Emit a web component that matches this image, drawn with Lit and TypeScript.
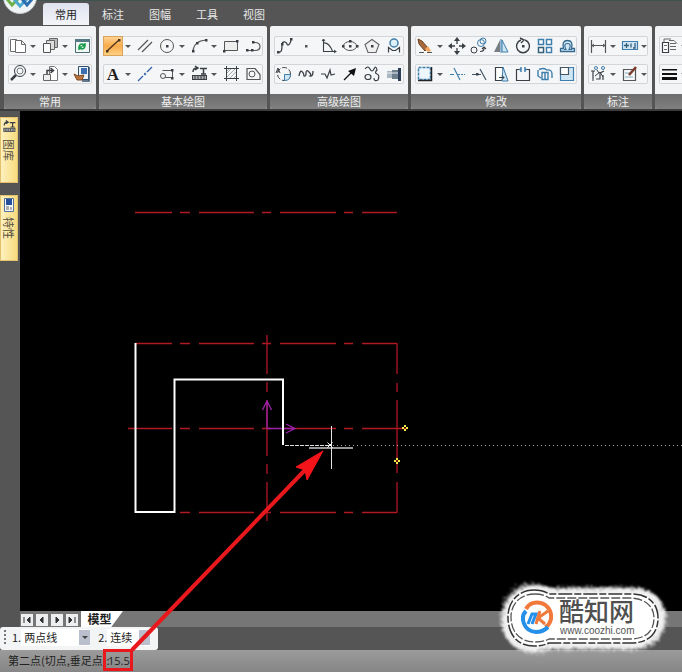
import { LitElement, html, svg, css, SVGTemplateResult } from "lit";
import { customElement, property } from "lit/decorators.js";

const K = "#3a3f46";
const B = "#3f7fae";
const L = "#cfe6f5";

const line = (d: string, c = K, w = 1, f = "none") =>
  svg`<path d=${d} stroke=${c} stroke-width=${w} fill=${f}></path>`;
const dots = (pts: number[][], c = K) =>
  pts.map(([x, y]) => svg`<rect x=${x - 1} y=${y - 1} width="2.5" height="2.5" fill=${c}></rect>`);

const icons: Record<string, SVGTemplateResult> = {
  copy: svg`${line("M3.5 3.5h5v12h-6v-12z", "#6b6b6b", 1, "#fff")}${line("M7.5 4.5h6l4 4v8h-10zM13.5 4.5v4h4", "#6b6b6b", 1, "#fff")}`,
  paste: svg`${line("M9.5 2.5h8v9h-8z", "#666", 1, "#bbb")}${line("M6.5 4.5h8v9h-8z", "#666", 1, "#ddd")}${line("M3.5 7.5h7v9h-7z", "#555", 1, "#fafafa")}`,
  refresh: svg`${line("M3.5 3.5h14v13h-14z", "#4c6b74", 1, "#eff8f3")}${line("M3 4.5h15", "#557a86", 3)}${line("M7 10q3-4 6 0M13 7v3h-3M13 11q-3 4-6 0M7 14v-3h3", "#159a4a", 1.5)}`,
  zoom: svg`<circle cx="12" cy="7" r="5.5" fill="#f4f8fb" stroke=${K}></circle><circle cx="12" cy="7" r="3" fill="none" stroke="#777"></circle>${line("M8 11l-5 5", K, 2.5)}`,
  block: svg`${line("M9.5 2.5h5l3 3v11h-8z", "#777", 1, "#fff")}${line("M3.5 10.5h7v6h-7z", "#666", 1, "#eee")}${line("M7 10V6.5h6M10.500 4l3 2.5-3 2.5", K, 1.5)}`,
  props: svg`${line("M6.5 2.5h10v13h-10z", "#35506e", 1, "#eaf2fb")}<rect x="9" y="4" width="6" height="6" fill="#3b6fb0"></rect><path d="M2 10l4 2 6-1-2 5H5z" fill="#bd7541" stroke="#7c4a24"></path>${line("M17 3v14h-7", "#35506e", 1.5)}`,
  line: svg`${line("M4 15L16 4", "#4b341d", 1.3)}${dots([[4, 15], [16, 4]], "#4b341d")}`,
  parallel: svg`${line("M3 14L13 4M7 16L17 6", "#555", 1.2)}`,
  circle: svg`<circle cx="10" cy="10" r="6.5" fill="none" stroke="#555"></circle>${dots([[10, 10]])}`,
  arc: svg`${line("M4 15Q5 5 17 4", "#555", 1.2)}${dots([[4, 15], [17, 4], [8, 7]])}`,
  rect: svg`${line("M3.5 5.5h13v9h-13z", "#555", 1, "#eee")}${dots([[16, 5], [3, 15]])}`,
  pline: svg`${line("M4 14.5h8q5 0 5-4t-5-4h-2M4 14.5h5", "#555", 1.2)}${dots([[4, 14], [9, 14], [10, 6]])}`,
  text: svg`<text x="10" y="16" text-anchor="middle" font-family="Liberation Serif, serif" font-weight="bold" font-size="17" fill="#222">A</text>`,
  axis: svg`${line("M3 17L8 12M12 8l5-5", "#2f62a8", 1.3)}${line("M9.3 10.7l1.4-1.400", "#2f62a8", 2)}`,
  callout: svg`${line("M5.5 6.5h10v7h-8", "#555", 1)}<circle cx="6" cy="12" r="2.5" fill="#f4f5f7" stroke="#555"></circle>${dots([[15, 14], [15, 6]])}`,
  library: svg`${line("M4 8q0-4 4-4M6 2l3 2-3 2M11 4.5h7M14.5 4v6M12 10h5", K, 1.5)}<rect x="3.5" y="11.5" width="14" height="4" fill="#aaa" stroke=${K}></rect>${line("M6 12v3M9 12v3M12 12v3M15 12v3", K)}`,
  hatch: svg`${line("M5.5 2v15M15.5 2v15M3 4.5h15M3 14.5h15", K, 1)}${line("M6 9l4-4M6 13l8-8M9 14l6-6M13 14l2-2M6 7l2-2", "#999", .8)}`,
  region: svg`${line("M4 4.5h8l5 6v5H4z", "#555", 1.2)}<circle cx="9" cy="10" r="3" fill="none" stroke="#555"></circle>`,
  spline: svg`${line("M4 16c4 1 4-3 4-7s4-4 5-1 4-1 4-5", K, 1.3)}${dots([[4, 16], [8, 8], [17, 3]])}`,
  point: svg`<rect x="9" y="9" width="2.5" height="2.5" fill="#555"></rect>`,
  formula: svg`${line("M5.5 3v12.5h13M5.5 7q5-1 9 8", K, 1.1)}${line("M4 5l1.5-2L7 5M16 14l2 1.5-2 1.5", K)}`,
  ellipse: svg`<ellipse cx="10" cy="10" rx="6.5" ry="4.5" fill="none" stroke="#555"></ellipse>${dots([[10, 5], [3, 10], [17, 10], [10, 10]])}`,
  polygon: svg`${line("M10 3.5l7 5-3 8H6L3 8.5z", "#666", 1.1, "#f0f0f0")}${dots([[10, 10]])}`,
  stamp: svg`<circle cx="10" cy="7" r="4" fill="#dff0fa" stroke=${B} stroke-width="1.5"></circle>${line("M4.5 16.5v-5l4 3h3l4-3v5", K, 1.2)}`,
  detail: svg`<circle cx="10" cy="10" r="6.5" fill="none" stroke="#444" stroke-dasharray="5 2"></circle>${line("M2 9l2-5 2 5M3 7h2", K)}<path d="M10.5 10.5h6q0 6-6 6z" fill=${L} stroke=${B}></path>`,
  wave: svg`${line("M3 12q1-6 3-4.5T8 12q2 1 2-3t3-1 1 4q3 1 3-5", K, 1.3)}`,
  breakline: svg`${line("M3 10h4l2 4 3-8 1 5 4-1", K, 1.2)}`,
  arrow: svg`${line("M4 16l8-8", "#111", 1.2)}<path d="M16 4l-2 8-6-5z" fill="#111"></path>`,
  contour: svg`${line("M3 5q3-4 5 0t4 0 3 1q-3 3 0 4t1 6q-4 2-4-2", K, 1.2)}<ellipse cx="6" cy="13" rx="3" ry="2.5" fill="none" stroke=${K} stroke-width="1.2"></ellipse>`,
  shaft: svg`<rect x="3" y="7" width="5" height="7" fill="#aab6bf"></rect><path d="M8 6h6v9H8z" fill="#6e7f8d"></path><path d="M14 4h3v13h-3z" fill="#2d3d57"></path>${line("M3 9h11", "#e8eef3")}`,
  erase: svg`${line("M3 3l4 2 6 7-3 3-6-7z", "#6b4524", 1, "#a9683a")}<path d="M10 13l3-3 3 5-3 1z" fill="#f0a45c"></path>${line("M4 16.500h5M12 16.500h5", "#555")}`,
  move: svg`${line("M10 3v14M3 10h14", K, 1.3)}<path d="M10 1l3 4H7zM10 19l3-4H7zM1 10l4-3v6zM19 10l-4-3v6z" fill=${K}></path><rect x="8" y="8" width="4" height="4" fill="#f4f5f7"></rect>`,
  duplicate: svg`<circle cx="12" cy="7" r="3.5" fill="none" stroke=${B}></circle><circle cx="14" cy="5" r="3" fill="none" stroke=${B}></circle><circle cx="5" cy="14" r="3" fill="none" stroke=${K}></circle>${line("M11 15.5q4 0 4-3M13 13l2-2 2 2", K, 1.2)}`,
  mirror: svg`<path d="M9 4v12H3z" fill="#777d84"></path><path d="M11 4v12h6z" fill=${L} stroke=${B}></path>${line("M10 3v14", B)}`,
  rotate: svg`${line("M12 4a6.5 6.5 0 1 1-4 0M7 2l4 2-3 3", K, 1.4)}${dots([[10, 10]])}`,
  array: svg`${line("M3.5 3.5h5v5h-5zM11.500 3.5h5v5h-5zM11.500 11.500h5v5h-5z", B, 1.5, "#fff")}${line("M3.5 11.500h5v5h-5z", "#356078", 1.5, "#fff")}`,
  offset: svg`${line("M3.5 15.5v-3h3q-2-8 4-8t4 8h3v3z", "#356a90", 1.3, L)}${line("M7 13.5h2q-3-6 1.5-6t1.5 6h3", "#356a90", 1.1)}`,
  crop: svg`<path d="M3.5 3.5h12v12h-12z" fill="#edf6fc" stroke=${B} stroke-width="1.5" stroke-dasharray="3 1"></path>${line("M16.500 3v13.5H3", "#222", 1.5)}`,
  trim: svg`${line("M3 10.5h4M7 4l6 12", B, 1.2)}<path d="M11 10.5h7" stroke=${B} stroke-dasharray="2 1"></path>`,
  extend: svg`${line("M3 10.5h9M11 5l6 11", "#456", 1.2)}${dots([[8, 10]])}`,
  stretch: svg`${line("M4.5 3.5h7l5 13h-12z", K, 1.2, "#fff")}<path d="M12 3l5 14h-6z" fill=${L} stroke=${B}></path>${line("M8 13.5h5M11 11.500l2 2-2 2", K)}`,
  breakat: svg`${line("M6 5.5H3.5v11h13v-11H14", K, 1.2)}${line("M8 3v5M12 3v5M6 5.5h2M12 5.5h2", B, 1.5)}`,
  scale: svg`${line("M3 6v6l3 2M4 5.5q5-2 7 0M7 8.5h6v7H7zM11 6q6-1 6 4v4M10 9v6", B, 1.4, "none")}`,
  corner: svg`${line("M3.5 3.5h13v13h-13z", B, 1.2, L)}${line("M3.5 3.5h8v7h-8z", "#456", 1.2, "#fff")}`,
  dimension: svg`${line("M3.5 4v13M17.500 4v13M4 9.5h13", "#555", 1.2)}${line("M6 8L4 9.5 6 11M15 8l2 1.5-2 1.5", "#555")}`,
  tolerance: svg`${line("M2.5 5.5h15v8h-15z", B, 1.2, L)}${line("M4 9.5h5M6.500 7v5M11 7.5v4M15 7v5h-2", "#356078", 1.3)}`,
  coord: svg`${line("M3 7h4M5 7v8M8 15h4V9M12 9l4-2M15 11v5M4 16h2", K, 1.2)}<circle cx="8" cy="4" r="1.5" fill="none" stroke=${B}></circle><circle cx="15" cy="4" r="1.5" fill="none" stroke=${B}></circle>${line("M9 6l2 3M7 12l5-4 3 5", K)}`,
  editdim: svg`${line("M3.5 5.5h12v11h-12z", "#555", 1.2, "#f4f8fb")}${line("M5 9h5M5 13h8", "#8ab")}${line("M9 11l7-8", "#7b3c2c", 2.5)}`,
  layers: svg`${line("M3.5 6.5h6v10h-6z", K, 1.2, "#fff")}${line("M5 9.5h3M5 13.5h3M10 4.5h5l3 3M11 7.5h6M11 10.5h6M11 13.5h6", "#666")}${line("M5 6V3h7", "#666")}`,
  weight: svg`<path d="M3 5h15v1.5H3zM3 9h15v2H3zM3 13h15v3H3z" fill="#111"></path>`,
};

interface Panel {
  title: string;
  rows: string[][];
}

// A trailing "+" marks a tool that opens a drop-down list of variants.
const panels: Panel[] = [
  { title: "常用", rows: [["copy+", "paste+", "refresh"], ["zoom+", "block+", "props"]] },
  { title: "基本绘图", rows: [["line+", "parallel", "circle+", "arc+", "rect", "pline"], ["text+", "axis", "callout+", "library+", "hatch", "region"]] },
  { title: "高级绘图", rows: [["spline", "point", "formula", "ellipse", "polygon", "stamp"], ["detail", "wave", "breakline", "arrow", "contour", "shaft"]] },
  { title: "修改", rows: [["erase+", "move", "duplicate", "mirror", "rotate", "array", "offset"], ["crop+", "trim", "extend", "stretch", "breakat", "scale", "corner"]] },
  { title: "标注", rows: [["dimension+", "tolerance+"], ["coord+", "editdim+"]] },
  { title: "", rows: [["layers+", "layers"], ["weight+", "weight"]] },
];

@customElement("cad-panel")
class CadPanel extends LitElement {
  @property({ attribute: false }) panel!: Panel;

  static styles = css`
    :host { display: flex; flex-direction: column; flex: none; border-radius: 2px; overflow: hidden; background: #f2f3f4; }
    .rows { display: grid; align-content: start; gap: 8px; padding: 10px 4px; flex: 1; box-sizing: border-box; }
    .row { display: flex; gap: 2px; height: 20px; border-radius: 2px; box-shadow: inset 0 0 0 1px #d3d5d8; background: #f5f6f7; }
    .tool { display: flex; flex: none; }
    button { border: 0; padding: 0; margin: 0; background: none; display: grid; place-items: center; }
    .icon { width: 20px; height: 20px; }
    .active { background: linear-gradient(#ffd79a, #f9ab4b 50%, #ffd58a); box-shadow: inset 0 0 0 1px #d9a45e; }
    .drop { width: 10px; }
    .tool:last-child .drop { width: 8px; }
    .caret { border: 3px solid transparent; border-top-color: #555; border-bottom: 0; }
    .title { height: 16px; line-height: 14px; text-align: center; color: #f0f0f0; font-size: 11px; background: linear-gradient(#6c6c6c, #808080); }
    svg { display: block; }
  `;

  render() {
    return html`
      <div class="rows">
        ${this.panel.rows.map((row) => html`<div class="row">
          ${row.map((entry) => {
            const name = entry.replace("+", "");
            return html`<span class="tool">
              <button class="icon ${name === "line" ? "active" : ""}" aria-label=${name}>
                <svg width="20" height="20" viewBox="0 0 20 20">${icons[name]}</svg>
              </button>
              ${entry.endsWith("+") ? html`<button class="drop" aria-label="${name} ▾"><span class="caret"></span></button>` : ""}
            </span>`;
          })}
        </div>`)}
      </div>
      <div class="title">${this.panel.title}</div>`;
  }
}

const centreDashX = "M180 0h10M199 0h55M262 0h9M280 0h56M344 0h9M362 0h35";

@customElement("cad-drawing")
class CadDrawing extends LitElement {
  static styles = css`
    :host { display: block; background: #000; overflow: hidden; }
    svg { display: block; width: 100%; height: 100%; }
  `;

  render() {
    return html`<svg>
      <g transform="translate(-20 -111)" fill="none">
        <g stroke="#b01822" stroke-width="1.3">
          <path transform="translate(0 212.5)" d="M135 0h37${centreDashX}"></path>
          <path transform="translate(0 343.5)" d="M135 0h37${centreDashX}"></path>
          <path transform="translate(0 428.5)" d="M128 0h44M180 0h10M199 0h55M262 0h9M283 0h53M344 0h9M362 0h46"></path>
          <path transform="translate(0 512.5)" d=${centreDashX}></path>
          <path d="M267 335v39M267 382v10M267 400v56M267 464v10M267 482v39M397 343v31M397 383v9M397 400v73M397 482v31"></path>
        </g>
        <path d="M267 428.5V402M262.500 410l4.5-9 4.5 9M267 428.5h27M286 424l9 4.5-9 4.5" stroke="#9a22aa" stroke-width="1.3"></path>
        <path d="M135.500 343v169h39V379.500H283V445" stroke="#fff" stroke-width="2"></path>
        <path d="M285 445.500h45" stroke="#ddd" stroke-dasharray="4 1"></path>
        <path d="M333 445.500h2000" stroke="#aaa" stroke-dasharray="1 3"></path>
        <path d="M309 448h44" stroke="#989898" stroke-width="2"></path>
        <path d="M331.500 426v43" stroke="#e4e4e4"></path>
        <path d="M327.500 442.500l5 5M332.500 442.500l-5 5" stroke="#fff"></path>
        <path d="M405 425v2M405 429v2M402 428h2M406 428h2M397 458v2M397 462v2M394 461h2M398 461h2" stroke="#f0ec4a" stroke-width="2"></path>
      </g>
    </svg>`;
  }
}

@customElement("app-root")
class AppRoot extends LitElement {
  static styles = css`
    :host { display: flex; flex-direction: column; position: relative; min-height: 100vh; overflow: hidden; box-sizing: border-box; background: #555; font: 12px "Noto Sans CJK SC", sans-serif; color: #222; }
    button, select, input { font: inherit; color: inherit; }
    button { border: 0; padding: 0; margin: 0; }
    .tabs { display: flex; align-items: stretch; height: 26px; box-sizing: border-box; padding: 2px 0 1px 43px; gap: 1px; border-top: 1px solid #3e5250; }
    .tab { width: 46px; color: #e8e8e8; background: none; line-height: 20px; font-size: 11px; }
    .tab.on { color: #222; background: linear-gradient(#dfe2ef, #f4f5f9); border-radius: 3px 3px 0 0; }
    .logo { position: absolute; left: 2px; top: -21px; }
    .ribbon { display: flex; gap: 3px; height: 85px; padding: 0 0 0 4px; box-sizing: border-box; overflow: hidden; border-bottom: 2px solid #3c3c3c; }
    .work { display: flex; flex: 1; }
    .side { width: 20px; flex: none; padding-top: 6px; box-sizing: border-box; display: flex; flex-direction: column; gap: 12px; }
    .dock { width: 18px; height: 66px; padding: 2px 0 0; display: flex; flex-direction: column; align-items: center; gap: 4px; background: linear-gradient(90deg, #fff3c4, #f8d979); box-shadow: inset 0 0 0 1px #e4c26c; }
    .vert { writing-mode: vertical-rl; text-orientation: sideways; line-height: 16px; font-size: 11px; color: #55503f; }
    cad-drawing { flex: 1; }
    .sheets { display: flex; height: 16px; margin-left: 20px; padding-left: 1px; background: #767676; }
    .nav { width: 12px; height: 12px; margin: 3px 3px 0 0; background: #eceef0; display: grid; place-items: center; }
    .sheet { width: 42px; padding-right: 5px; background: #fff; clip-path: polygon(0 0, 100% 0, 72% 100%, 0 100%); font-size: 12px; font-weight: bold; line-height: 16px; }
    .options { display: flex; align-self: flex-start; align-items: center; height: 23px; width: 158px; box-sizing: border-box; padding: 0 0 3px 4px; background: #f3f4f5; border-radius: 3px; font-size: 11px; }
    .grip { width: 2px; height: 14px; border-left: 2px dotted #777; box-sizing: border-box; margin-right: 6px; }
    .pick { display: flex; align-items: center; }
    .pick + .pick { margin-left: 8px; }
    .field { position: relative; display: flex; }
    select { appearance: none; border: 0; height: 17px; padding: 0 0 0 3px; margin: 0; border-radius: 0; background: #fff; }
    .wide { width: 69px; }
    .narrow { width: 43px; }
    .caret { position: absolute; right: 0; top: 1px; bottom: 1px; width: 11px; display: grid; place-items: center; background: #b9bfcc; pointer-events: none; }
    .caret::after { content: ""; border: 3px solid transparent; border-top-color: #444; border-bottom: 0; }
    .status { display: flex; align-items: center; height: 22px; box-sizing: border-box; padding: 0 0 2px 8px; background: linear-gradient(#9b9b9b, #868686); font-size: 11px; }
    .status label { width: 100px; white-space: nowrap; }
    .status input { width: 24px; border: 0; padding: 0; background: none; font-family: "Open Sans", sans-serif; font-size: 11px; outline: 0; }
    .pointer { position: absolute; left: 0; bottom: 0; pointer-events: none; }
    .brand { position: absolute; right: 12px; bottom: 14px; pointer-events: none; }
  `;

  render() {
    return html`
      <nav class="tabs">
        ${["常用", "标注", "图幅", "工具", "视图"].map((t, i) => html`<button class="tab ${i === 0 ? "on" : ""}">${t}</button>`)}
      </nav>
      <svg class="logo" width="36" height="36" viewBox="0 0 36 36">
        <circle cx="18" cy="18" r="16.5" fill="#f1f4f5" stroke="#c4c9cc"></circle>
        <path d="M5 20l5 6 6-6" fill="none" stroke="#6fb04a" stroke-width="3"></path>
        <path d="M11 19l7 8 7-7" fill="none" stroke="#4aa9cc" stroke-width="3"></path>
        <path d="M20 20l5 6 6-7" fill="none" stroke="#2c6eb0" stroke-width="3"></path>
      </svg>
      <div class="ribbon">${panels.map((p) => html`<cad-panel .panel=${p}></cad-panel>`)}</div>
      <main class="work">
        <aside class="side">
          <button class="dock"><svg width="16" height="16" viewBox="0 0 20 20">${icons.library}</svg><span class="vert">图库</span></button>
          <button class="dock"><svg width="14" height="16" viewBox="0 0 14 16"><path d="M2.5 1.5h9v13h-9z" fill="#f4f7fc" stroke="#53709a"></path><path d="M4 2h6v6H4z" fill="#264f9a"></path><path d="M4 10h3M4 12h3M9 10v3" stroke="#666"></path></svg><span class="vert">特性</span></button>
        </aside>
        <cad-drawing></cad-drawing>
      </main>
      <div class="sheets">
        ${["M4 4v6M10 4L7 7l3 3z", "M8 4L5 7l3 3z", "M6 4l3 3-3 3z", "M10 4v6M4 4l3 3-3 3z"].map((d, i) => html`
          <button class="nav" aria-label="sheet ${i + 1}"><svg width="12" height="12" viewBox="1 1 12 12"><path d=${d} fill="#333" stroke="#333"></path></svg></button>`)}
        <button class="sheet">模型</button>
      </div>
      <div class="options">
        <span class="grip"></span>
        <label class="pick">1.<span class="field"><select class="wide"><option>两点线</option></select><span class="caret"></span></span></label>
        <label class="pick">2.<span class="field"><select class="narrow"><option>连续</option></select><span class="caret"></span></span></label>
      </div>
      <footer class="status">
        <label for="cmd">第二点(切点,垂足点):</label><input id="cmd" value="15.5">
      </footer>
      <svg class="pointer" width="340" height="230" viewBox="0 442 340 230">
        <rect x="104.5" y="650.5" width="27" height="19" fill="none" stroke="#e8181c" stroke-width="3"></rect>
        <path d="M132 650L306 469" stroke="#e8181c" stroke-width="4"></path>
        <path d="M323 451L296 467l9 3 2 10z" fill="#f5141a" stroke="#f5141a"></path>
      </svg>
      <svg class="brand" width="174" height="80" viewBox="496 578 174 80">
        <defs>
          <filter id="fuzz" x="-10%" y="-20%" width="120%" height="140%">
            <feTurbulence type="fractalNoise" baseFrequency=".7" numOctaves="2" result="n"></feTurbulence>
            <feDisplacementMap in="SourceGraphic" in2="n" scale="12" result="d"></feDisplacementMap>
            <feGaussianBlur in="d" stdDeviation="1"></feGaussianBlur>
          </filter>
        </defs>
        <path d="M534 588q8 0 15 3h83c20 0 30 12 30 26 0 17-11 29-30 29h-83c-6 3-10 3-16 3-18 0-28-13-28-31 0-17 12-30 29-30z" fill="#f8f8f8" stroke="#f0f0f0" stroke-width="7" filter="url(#fuzz)"></path>
        <path d="M534 590q9 0 15 4h82c18 0 27 10 27 24 0 15-9 25-27 25h-82c-7 3-10 3-15 3-17 0-26-12-26-29 0-15 10-27 26-27z" fill="#fff" stroke="#333" stroke-width="1.5" stroke-dasharray="14 2 7 2"></path>
        <path d="M535 594q8 0 14 4h80c16 0 25 8 25 20 0 13-8 21-24 21h-81c-6 3-10 3-14 3-16 0-24-11-24-25 0-13 9-23 24-23z" fill="#fff" stroke="#555" stroke-width="1.3" stroke-dasharray="9 2"></path>
        <g fill="none" stroke-width="4">
          <path d="M526 609c6-12 27-7 25 10-1 4-3 7-6 8" stroke="#f0793b"></path>
          <path d="M526 611c-6 6-3 20 10 21 5 0 9-2 12-5" stroke="#2490ea"></path>
          <path d="M528 624l4-10h4l-4 10" stroke="#2490ea" stroke-width="3"></path>
          <path d="M536 624l4-13M548 611l-10 7 7 6" stroke="#f0793b" stroke-width="3"></path>
        </g>
        <text x="559" y="621" font-family="Noto Sans CJK SC, sans-serif" font-size="25" font-weight="500" fill="#505050">酷知网</text>
        <text x="560" y="634" font-family="Liberation Sans, sans-serif" font-size="10" fill="#555">www.coozhi.com</text>
      </svg>`;
  }
}
